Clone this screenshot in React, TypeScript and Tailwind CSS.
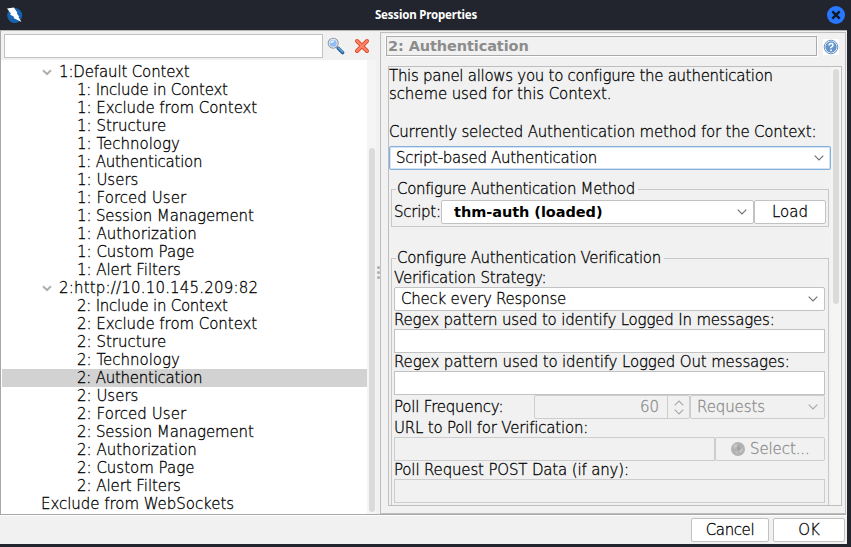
import React from "react";

function Chevron({ color = "#6e6e6e", className = "" }: { color?: string; className?: string }) {
  return (
    <svg width="10" height="6" viewBox="0 0 10 6" className={"shrink-0 " + className}>
      <path d="M0.7 0.7 L5 5 L9.3 0.7" fill="none" stroke={color} strokeWidth="1.1" />
    </svg>
  );
}

function Combo({ label, className = "", disabled = false }: { label: string; className?: string; disabled?: boolean }) {
  return (
    <div
      className={
        "flex h-6 items-center justify-between rounded-[2px] border pr-[6px] " +
        (disabled ? "border-[#cdcdcd] text-[#8c8c8c] " : "bg-white ") +
        className
      }
    >
      <span>{label}</span>
      <Chevron color={disabled ? "#a6a6a6" : "#6e6e6e"} />
    </div>
  );
}

function Label({ children, className = "" }: { children: React.ReactNode; className?: string }) {
  return <div className={"h-[18px] leading-[18px] " + className}>{children}</div>;
}

const items = [
  { name: "Include in Context", tracking: "tracking-[-0.25px]" },
  { name: "Exclude from Context", tracking: "tracking-[-0.05px]" },
  { name: "Structure", tracking: "" },
  { name: "Technology", tracking: "" },
  { name: "Authentication", tracking: "tracking-[-0.25px]" },
  { name: "Users", tracking: "" },
  { name: "Forced User", tracking: "tracking-[0.05px]" },
  { name: "Session Management", tracking: "tracking-[-0.14px]" },
  { name: "Authorization", tracking: "" },
  { name: "Custom Page", tracking: "" },
  { name: "Alert Filters", tracking: "tracking-[-0.06px]" },
];

function ContextNode({
  n,
  title,
  selected,
  titleClass,
}: {
  n: number;
  title: string;
  selected?: string;
  titleClass: string;
}) {
  return (
    <div>
      <div className="flex h-[18px] items-center pl-[40px]">
        <svg width="10" height="7" viewBox="0 0 10 7" className="mt-px">
          <path d="M1 1.2 L5 5 L9 1.2" fill="none" stroke="#b0b0b0" strokeWidth="2" />
        </svg>
        <span className={"ml-[7px] " + titleClass}>{title}</span>
      </div>
      {items.map((item) => (
        <div
          key={item.name}
          className={
            "h-[18px] pl-[75px] leading-[18px] " + item.tracking + (item.name === selected ? " bg-[#d2d2d2]" : "")
          }
        >
          {n}: {item.name}
        </div>
      ))}
    </div>
  );
}

function TitleBar() {
  return (
    <div className="flex h-[30px] shrink-0 items-center justify-between pr-[6px] pl-[6px]">
      <svg width="17" height="17" viewBox="0 0 17 17">
        <circle cx="8.7" cy="8.5" r="7.5" fill="#1763b0" />
        <path d="M1 1.5 L8 0.5 L11.5 6 L10.8 6.5 L13.2 9.5 L12.4 10 L15.5 15 L7.5 11 L8.3 10 L4 7.5 L5 6.8 Z" fill="#fff" />
      </svg>
      <span className="ml-[2px] font-['Noto_Sans','Open_Sans',sans-serif] text-[11.5px] font-bold tracking-[-0.18px] text-white [-webkit-text-stroke:0]">
        Session Properties
      </span>
      <svg width="18" height="18" viewBox="0 0 18 18">
        <circle cx="9" cy="9" r="9" fill="#2777ff" />
        <path d="M5.3 5.3 L12.7 12.7 M12.7 5.3 L5.3 12.7" stroke="#101828" strokeWidth="2.4" />
      </svg>
    </div>
  );
}

function TreePanel() {
  return (
    <div className="flex w-[376px] shrink-0 flex-col border-l border-[#a8a8a8]">
      <div className="flex h-[29px] items-center bg-[#f1f1f1] pl-[3px]">
        <div className="h-6 w-[319px] border border-[#c2c2c2] bg-white" />
        <svg width="18" height="18" viewBox="0 0 18 18" className="ml-[4px]">
          <path d="M9.5 9.5 L11.5 11.5" stroke="#9b9b9b" strokeWidth="2" />
          <path d="M11.3 11.3 L15.6 15.6" stroke="#245a92" strokeWidth="3.4" strokeLinecap="round" />
          <path d="M11.4 10.9 L15.6 15" stroke="#65a9e0" strokeWidth="1.5" strokeLinecap="round" />
          <circle cx="6.2" cy="6.2" r="5" fill="#e4f0fc" stroke="#9a9a9a" strokeWidth="1.1" />
          <circle cx="6.2" cy="6.2" r="3.5" fill="#8fbcf5" />
          <path d="M3 6 Q4 3 7 3.2 Q8 5.5 3 6Z" fill="#edf6ff" />
        </svg>
        <svg width="16" height="16" viewBox="0 0 16 16" className="ml-[9px]">
          <path d="M3 3 L13 13 M13 3 L3 13" stroke="#dc4a2c" strokeWidth="4" strokeLinecap="round" />
          <path d="M3 3 L13 13 M13 3 L3 13" stroke="#ff8467" strokeWidth="2.2" strokeLinecap="round" />
        </svg>
      </div>
      <div className="flex flex-1">
        <div className="w-[366px] bg-white pt-[3px] pl-px">
          <ContextNode n={1} title="1:Default Context" titleClass="tracking-[-0.14px]" />
          <ContextNode n={2} title="2:http://10.10.145.209:82" selected="Authentication" titleClass="tracking-[0.19px]" />
          <div className="h-[18px] pl-[39px] leading-[18px] tracking-[-0.04px]">Exclude from WebSockets</div>
        </div>
        <div className="flex-1 bg-[#f5f5f5] pt-[88px] pl-[2px]">
          <div className="h-[364px] w-[6px] rounded-full bg-[#dbdbdb]" />
        </div>
      </div>
    </div>
  );
}

function GroupTop({ label }: { label: string }) {
  return (
    <div className="-mt-[9px] flex h-[18px] items-center">
      <div className="mr-px h-px w-[4px] bg-[#c8c8c8]" />
      <span className="leading-[18px] tracking-[-0.33px]">{label}</span>
      <div className="ml-[3px] h-px flex-1 bg-[#c8c8c8]" />
    </div>
  );
}

function AuthForm() {
  return (
    <div className="flex h-[440px] w-[454px] overflow-hidden border border-[#bebebe]">
      <div className="w-[442px] shrink-0">
        <Label className="tracking-[-0.28px]">This panel allows you to configure the authentication</Label>
        <Label className="tracking-[-0.1px]">scheme used for this Context.</Label>
        <Label className="mt-[20px] tracking-[-0.2px]">Currently selected Authentication method for the Context:</Label>
        <div className="mt-[5px] w-[442px]">
          <Combo
            label="Script-based Authentication"
            className="border-[#82aedc] pl-[6px] tracking-[-0.3px] shadow-[inset_0_0_0_1px_#d5e4f5]"
          />
        </div>

        <div className="mt-[19px] ml-[2px] flow-root h-[38px] w-[438px] border-x border-b border-[#c8c8c8]">
          <GroupTop label="Configure Authentication Method" />
          <div className="mt-[2px] flex items-center pl-[2px]">
            <span className="w-[47px] tracking-[-0.25px]">Script:</span>
            <Combo
              label="thm-auth (loaded)"
              className="w-[313px] border-[#c2c2c2] pl-[12px] text-[14.5px] font-bold tracking-[-0.05px] [-webkit-text-stroke:0]"
            />
            <div className="flex h-6 w-[72px] items-center justify-center rounded-[2px] border border-[#c2c2c2] bg-white">Load</div>
          </div>
        </div>

        <div className="mt-[31px] ml-[2px] flow-root h-[260px] w-[438px] border-x border-[#c8c8c8] pr-[3px]">
          <div className="-mr-[3px]">
            <GroupTop label="Configure Authentication Verification" />
          </div>
          <div className="pl-[2px]">
            <Label className="mt-[2px] tracking-[-0.2px]">Verification Strategy:</Label>
            <Combo label="Check every Response" className="border-[#c2c2c2] pl-[6px] tracking-[-0.25px]" />
            <Label className="tracking-[-0.18px]">Regex pattern used to identify Logged In messages:</Label>
            <div className="h-6 border border-[#c2c2c2] bg-white" />
            <Label className="tracking-[-0.14px]">Regex pattern used to identify Logged Out messages:</Label>
            <div className="h-6 border border-[#c2c2c2] bg-white" />
            <div className="flex h-6 items-center">
              <span className="w-[140px] tracking-[-0.2px]">Poll Frequency:</span>
              <div className="flex h-6 w-[156px] items-center rounded-[2px] border border-[#cdcdcd] text-[#8c8c8c]">
                <span className="flex-1 pr-[8px] text-right">60</span>
                <div className="flex h-full w-[22px] flex-col items-center justify-center gap-[3px] border-l border-[#cdcdcd]">
                  <Chevron color="#a6a6a6" className="rotate-180" />
                  <Chevron color="#a6a6a6" />
                </div>
              </div>
              <Combo label="Requests" disabled className="flex-1 pl-[6px] tracking-[-0.1px]" />
            </div>
            <Label className="tracking-[-0.2px]">URL to Poll for Verification:</Label>
            <div className="flex">
              <div className="h-6 w-[321px] border border-[#cdcdcd]" />
              <div className="flex h-6 flex-1 items-center rounded-[2px] border border-[#cdcdcd] pl-[15px] tracking-[-0.1px] text-[#8c8c8c]">
                <svg width="14" height="14" viewBox="0 0 14 14" className="mr-[5px]">
                  <circle cx="7" cy="7" r="7" fill="#b2b2b2" />
                  <path d="M2 3 L5 1.5 L7 3 L5 6 L3 7Z M8 6 L11 5 L12 9 L9 11Z M4 9 L7 10 L6 12Z" fill="#c4c4c4" />
                  <path d="M7 4 L9 3 L8 6 L11 5 L9 8 L6 8Z" fill="#a0a0a0" />
                </svg>
                Select...
              </div>
            </div>
            <Label className="tracking-[-0.16px]">Poll Request POST Data (if any):</Label>
            <div className="h-6 border border-[#cdcdcd]" />
          </div>
        </div>
      </div>
      <div className="flex-1 bg-[#f5f5f5] pt-[2px] pl-[2px]">
        <div className="h-[235px] w-[6px] rounded-full bg-[#dbdbdb]" />
      </div>
    </div>
  );
}

export default function App() {
  return (
    <div className="flex h-[547px] w-[851px] flex-col overflow-hidden bg-[#23252e] font-['DejaVu_Sans',sans-serif] text-[15px] leading-[18px] font-extralight whitespace-nowrap text-black [-webkit-text-stroke:0.3px]">
      <TitleBar />
      <div className="flex h-[514px] w-[847px] flex-col bg-[#f1f1f1]">
        <div className="flex h-[486px] border-t border-b border-t-[#b4b4b4] border-b-white">
          <div className="flex w-[846px] border-b border-[#a8a8a8]">
            <TreePanel />
            <div className="flex w-[4px] shrink-0 flex-col items-center justify-center gap-[2px]">
              <div className="size-[3px] rounded-full bg-[#adadad]" />
              <div className="size-[3px] rounded-full bg-[#adadad]" />
              <div className="size-[3px] rounded-full bg-[#adadad]" />
            </div>
            <div className="mt-px w-[466px] border border-[#bebebe] pt-[3px]">
              <div className="flex h-[30px] items-start pl-[5px]">
                <div className="h-[20px] w-[431px] border border-[#aaa] pl-px text-[14.5px] leading-[18px] font-bold tracking-[-0.1px] text-[#8c8c8c] shadow-[1px_1px_0_#fff,-1px_-1px_0_#fff] [-webkit-text-stroke:0]">
                  2: Authentication
                </div>
                <div className="mt-[3px] ml-[6px] flex size-4 items-center justify-center bg-white">
                  <svg width="16" height="16" viewBox="0 0 16 16">
                    <circle cx="8" cy="8" r="6.8" fill="#fff" stroke="#6793c5" strokeWidth="1" />
                    <circle cx="8" cy="8" r="5.7" fill="#6494ca" />
                    <path d="M6 6.5 Q6 4.6 8 4.6 Q10 4.6 10 6.2 Q10 7.3 8 8.3 V9.3" fill="none" stroke="#fff" strokeWidth="1.5" />
                    <rect x="7.2" y="10.5" width="1.6" height="1.6" fill="#fff" />
                  </svg>
                </div>
              </div>
              <div className="ml-[7px]">
                <AuthForm />
              </div>
            </div>
          </div>
        </div>
        <div className="flex flex-1 justify-end gap-[4px] pt-[2px] pr-[2px]">
          <div className="flex h-6 w-[78px] items-center justify-center rounded-[2px] border border-[#c2c2c2] bg-white tracking-[-0.4px]">Cancel</div>
          <div className="flex h-6 w-[72px] items-center justify-center rounded-[2px] border border-[#c2c2c2] bg-white">OK</div>
        </div>
      </div>
    </div>
  );
}
